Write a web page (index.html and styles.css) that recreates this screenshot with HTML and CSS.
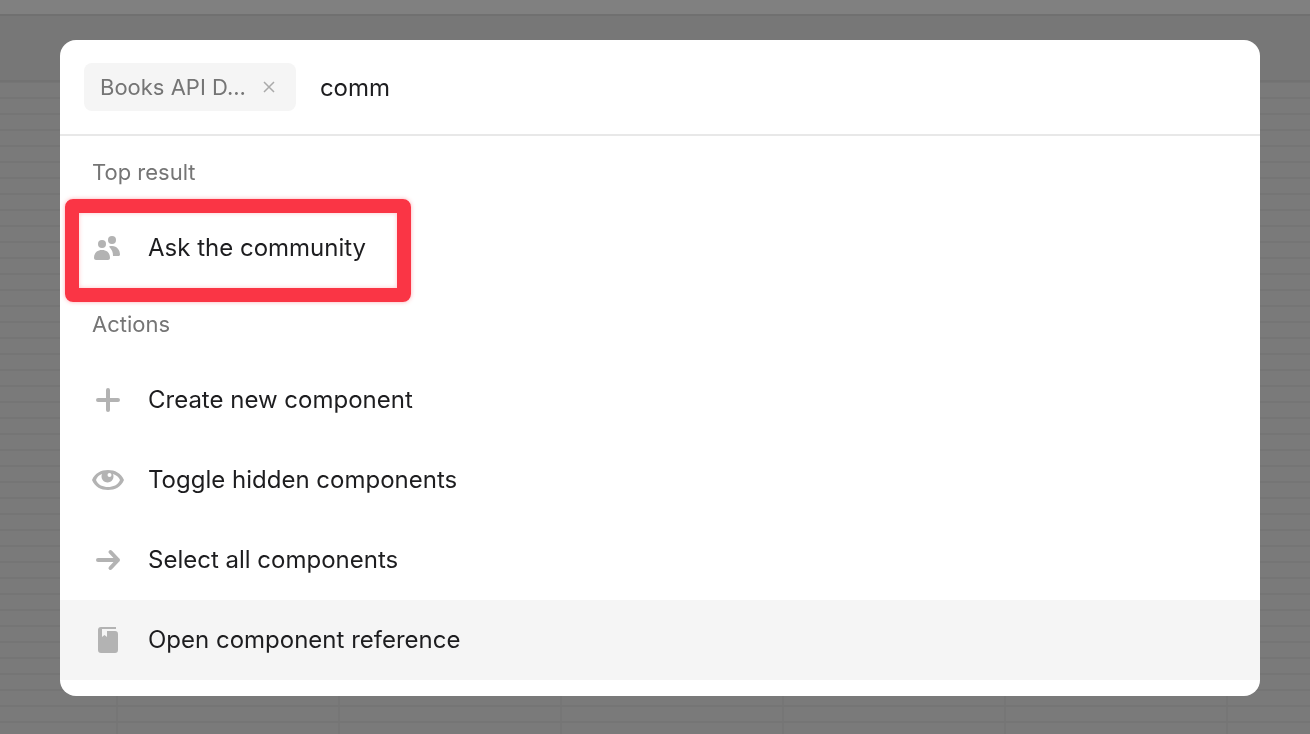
FILE: index.html
```html
<!DOCTYPE html>
<html lang="en">
<head>
  <meta charset="UTF-8" />
  <meta name="viewport" content="width=device-width, initial-scale=1" />
  <title>Quick search</title>
  <link rel="stylesheet" href="styles.css">
</head>
<body>

<div class="page">
  <div class="page-top"></div>
  <div class="page-header"></div>
  <div class="page-grid"></div>
</div>

<main class="overlay">
  <div class="modal" role="dialog" aria-label="Quick search">
    <div class="search">
      <span class="chip">
        Books API D...
        <button class="chip-remove" type="button" aria-label="Remove filter">
          <svg viewBox="0 0 12 12" width="12" height="12"><path stroke-width="1.500" d="M1 1l10 10M11 1L1 11"/></svg>
        </button>
      </span>
      <input class="search-input" type="text" value="comm" aria-label="Search">
    </div>

    <h2 class="group-title">Top result</h2>
    <div class="highlighted">
      <button class="result" type="button">
        <svg class="icon" viewBox="0 0 32 32">
          <circle cx="10" cy="12" r="4"/>
          <circle cx="20" cy="8" r="4"/>
          <path d="M2 26c0-5 3-8 8-8s8 3 8 8c0 1-1 2-2 2H4c-1 0-2-1-2-2z"/>
          <path d="M17 14.500c7-2 11 3 11 8 0 1-1 1.500-2 1.500h-5c0-4-1-6-4-9.500z"/>
        </svg>
        <span>Ask the community</span>
      </button>
      <div class="marker"></div>
    </div>

    <h2 class="group-title">Actions</h2>
    <button class="result" type="button">
      <svg class="icon icon-line" viewBox="0 0 32 32"><path d="M16 6v20M6 16h20"/></svg>
      <span>Create new component</span>
    </button>
    <button class="result" type="button">
      <svg class="icon" viewBox="0 0 32 32">
        <path fill-rule="evenodd" d="M0 16C3 9 9 6 16 6s13 3 16 10c-3 7-9 10-16 10S3 23 0 16zM4 16c2 5 7 7 12 7s10-2 12-7c-1-3-4-5-7-6a6 6 0 1 1-11 0c-3 1-5 3-6 6z"/>
        <circle class="eye-glint" cx="17.500" cy="11" r="2"/>
      </svg>
      <span>Toggle hidden components</span>
    </button>
    <button class="result" type="button">
      <svg class="icon icon-line" viewBox="0 0 32 32"><path d="M6 16h20M18.500 8l7.500 8-7.500 8"/></svg>
      <span>Select all components</span>
    </button>
    <button class="result active" type="button">
      <svg class="icon" viewBox="0 0 32 32">
        <path d="M9 3h15v2H10v8l2.500-2 2.500 2V7h8a3 3 0 0 1 3 3v16a3 3 0 0 1-3 3H9a3 3 0 0 1-3-3V6a3 3 0 0 1 3-3z"/>
      </svg>
      <span>Open component reference</span>
    </button>
  </div>
</main>

</body>
</html>
```
FILE: styles.css
```css
* {
  box-sizing: border-box;
}
body {
  margin: 0;
  font-family: Inter, "Liberation Sans", sans-serif;
  font-size: 24px;
  color: #1d1d1f;
  background: #7a7a7a;
}

/* dimmed page behind the dialog */
.page {
  position: fixed;
  inset: 0;
  display: flex;
  flex-direction: column;
}
.page-top {
  height: 16px;
  background: #808080;
  border-bottom: 2px solid #707070;
}
.page-header {
  height: 66px;
  background: #777;
  border-bottom: 2px solid #727272;
}
.page-grid {
  flex: 1;
  background:
    linear-gradient(to bottom, transparent 14px, #757575 14px) 0 1px / 100% 16px,
    linear-gradient(to right, #767676 2px, transparent 2px) 116px 0 / 222px 100%;
}

.overlay {
  position: relative;
  padding: 40px 50px 38px 60px;
}
.modal {
  padding-bottom: 16px;
  background: #fff;
  border-radius: 16px;
  overflow: hidden;
}

.search {
  display: flex;
  align-items: center;
  gap: 24px;
  height: 96px;
  padding: 0 24px;
  border-bottom: 2px solid #e8e8e8;
}
.chip {
  display: flex;
  align-items: center;
  gap: 12px;
  height: 48px;
  padding: 0 16px;
  border-radius: 8px;
  background: #f5f5f5;
  color: #757575;
  font-size: 22px;
  white-space: nowrap;
}
.chip-remove {
  display: flex;
  padding: 5px;
  border: none;
  background: none;
  cursor: pointer;
}
.chip-remove svg {
  stroke: #aaa;
}
.search-input {
  flex: 1;
  min-width: 0;
  padding: 0;
  border: none;
  outline: none;
  background: none;
  font: inherit;
  color: inherit;
}

.group-title {
  margin: 0;
  padding: 0 32px;
  font-size: 22px;
  font-weight: 400;
  line-height: 72px;
  color: #757575;
}
.result {
  display: flex;
  align-items: center;
  gap: 24px;
  width: 100%;
  height: 80px;
  padding: 0 32px;
  border: none;
  background: none;
  font: inherit;
  line-height: 28px;
  color: inherit;
  text-align: left;
  cursor: pointer;
}
.result.active,
.result:hover {
  background: #f5f5f5;
}
.icon {
  flex: none;
  width: 32px;
  height: 32px;
  fill: #b3b3b3;
}
.icon-line {
  fill: none;
  stroke: #b3b3b3;
  stroke-width: 4;
  stroke-linecap: round;
  stroke-linejoin: round;
}
.icon .eye-glint {
  fill: #fff;
}

.highlighted {
  position: relative;
}
.marker {
  position: absolute;
  top: -9px;
  left: 5px;
  width: 346px;
  height: 103px;
  border: 14px solid #fa3545;
  border-radius: 8px;
  box-shadow: 0 0 4px rgba(250, 53, 69, 0.4), inset 0 0 4px rgba(250, 53, 69, 0.3);
  pointer-events: none;
}
```
